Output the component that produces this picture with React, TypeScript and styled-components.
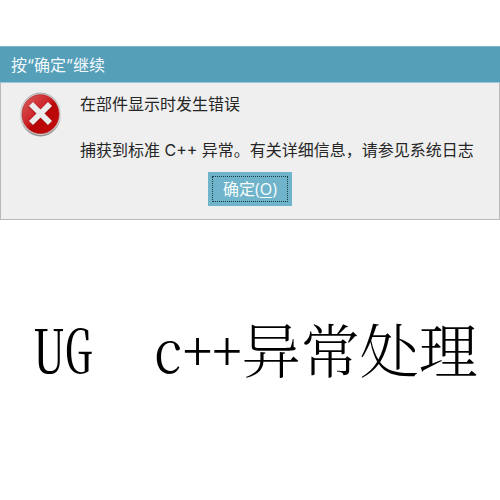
import React from "react";
import styled, { createGlobalStyle } from "styled-components";

const GlobalStyle = createGlobalStyle`
  * { box-sizing: border-box; }
  body { margin: 0; background: #fff; }
`;

const Page = styled.main`
  padding-top: 46px;
`;

const Dialog = styled.section`
  background: #efefef;
  border: 1px solid #b9b9b9;
  border-top: 0;
  font-family: Inter, "Noto Sans CJK SC", sans-serif;
  font-size: 16px;
  line-height: 24px;
  color: #262626;
`;

const TitleBar = styled.header`
  margin: 0 -1px;
  padding: 6px 11px 5px;
  background: #559fb9;
  border-top: 1px solid #7fb6ca;
  border-bottom: 1px solid #9cc8d8;
  color: #f4fafc;
`;

const Title = styled.h2`
  margin: 0;
  font: inherit;
`;

const Body = styled.div`
  display: flex;
  align-items: flex-start;
  gap: 18px;
  padding: 9px 18px 0;
`;

const ErrorIcon = styled.svg`
  flex: none;
  width: 43px;
  height: 45px;
`;

const Messages = styled.div`
  display: grid;
  gap: 22px;
  white-space: nowrap;
`;

const Message = styled.p`
  margin: 0;
`;

const Actions = styled.footer`
  display: flex;
  justify-content: center;
  padding: 10px 0 13px;
`;

const ConfirmButton = styled.button`
  padding: 4px;
  border: 0;
  background: #70b4cb;
  color: #f7fcfd;
  font: inherit;
`;

const FocusFrame = styled.span`
  display: block;
  padding: 0 10px;
  border: 1px dotted #173a46;
  font-family: "Open Sans", "Noto Sans CJK SC", sans-serif;
`;

const AccessKey = styled.span`
  text-decoration: underline;
  text-underline-offset: 2px;
`;

const Caption = styled.h1`
  display: flex;
  align-items: baseline;
  justify-content: center;
  margin: 86px 0 0;
  padding-left: 12px;
  font-family: "Noto Serif CJK SC", "Liberation Serif", serif;
  font-size: 59px;
  font-weight: 300;
  font-feature-settings: "hwid";
  line-height: 84px;
  color: #000;
  white-space: nowrap;
`;

const Product = styled.span`
  margin-right: 60px;
`;

export default function App() {
  return (
    <>
      <GlobalStyle />
      <Page>
        <Dialog role="alertdialog" aria-labelledby="dialog-title" aria-describedby="dialog-text">
          <TitleBar>
            <Title id="dialog-title">按“确定”继续</Title>
          </TitleBar>
          <Body>
            <ErrorIcon viewBox="0 0 43 45" aria-hidden="true">
              <defs>
                <linearGradient id="rim" x1="0" y1="0" x2="0" y2="1">
                  <stop offset="0" stopColor="#a4a4a4" />
                  <stop offset="0.5" stopColor="#d9d9d9" />
                  <stop offset="1" stopColor="#8f8f8f" />
                </linearGradient>
                <linearGradient id="red" x1="0" y1="0" x2="1" y2="1">
                  <stop offset="0" stopColor="#d96363" />
                  <stop offset="0.45" stopColor="#cc2026" />
                  <stop offset="0.55" stopColor="#b80608" />
                  <stop offset="1" stopColor="#c60c0c" />
                </linearGradient>
              </defs>
              <ellipse cx="21.5" cy="22.5" rx="20.5" ry="22" fill="url(#rim)" />
              <ellipse cx="21.5" cy="22.2" rx="19.5" ry="20.7" fill="#e2dfdf" />
              <ellipse cx="21.5" cy="22.2" rx="18.6" ry="19.6" fill="url(#red)" stroke="#a62a2a" strokeWidth="0.6" />
              <path d="M12 12.5 L31 31.5 M31 12.5 L12 31.5" stroke="#8e0d10" strokeOpacity="0.5" strokeWidth="7.2" />
              <path d="M12 12 L31 31 M31 12 L12 31" stroke="#ececec" strokeWidth="5.8" />
            </ErrorIcon>
            <Messages id="dialog-text">
              <Message>在部件显示时发生错误</Message>
              <Message>捕获到标准 C++ 异常。有关详细信息，请参见系统日志</Message>
            </Messages>
          </Body>
          <Actions>
            <ConfirmButton type="button">
              <FocusFrame>
                确定(<AccessKey>O</AccessKey>)
              </FocusFrame>
            </ConfirmButton>
          </Actions>
        </Dialog>
        <Caption>
          <Product>UG</Product>
          <span>c++异常处理</span>
        </Caption>
      </Page>
    </>
  );
}
